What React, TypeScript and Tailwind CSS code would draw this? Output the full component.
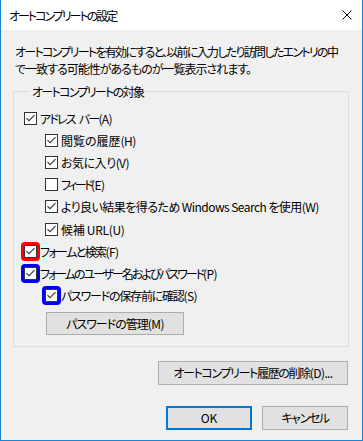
import React from "react";

function Box({ checked, ring }: { checked: boolean; ring?: "red" | "blue" }) {
  return (
    <span className="relative inline-flex w-[13px] h-[13px] shrink-0 border border-[#333333] bg-white items-center justify-center">
      {checked && (
        <svg width="11" height="11" viewBox="0 0 11 11">
          <polyline points="1.5,5.2 4,7.7 9.5,2.2" fill="none" stroke="#333333" strokeWidth="1.1" />
        </svg>
      )}
      {ring === "red" && (
        <span className="absolute -inset-[4px] border-[3px] border-[#ff0000] rounded-[4px]" />
      )}
      {ring === "blue" && (
        <span className="absolute -inset-[4px] border-[3px] border-[#0000ff] rounded-[4px]" />
      )}
    </span>
  );
}

function Row({
  children,
  checked,
  indent,
  ring,
}: {
  children: React.ReactNode;
  checked: boolean;
  indent?: boolean;
  ring?: "red" | "blue";
}) {
  return (
    <div className={indent ? "flex items-center h-[22.2px] pl-[21px]" : "flex items-center h-[22.2px]"}>
      <Box checked={checked} ring={ring} />
      <span className="ml-[3px] whitespace-nowrap">{children}</span>
    </div>
  );
}

function L({ children }: { children: React.ReactNode }) {
  return <span className="tracking-[-0.6px]">{children}</span>;
}

export default function App() {
  return (
    <div className="w-[363px] h-[441px] flex flex-col border-x border-b border-[#1883d7] bg-[#f0f0f0] text-[12px] leading-[15px] text-black font-['Noto_Sans_CJK_JP',sans-serif] [font-feature-settings:'palt']">
      <div className="h-[30px] bg-white flex items-center justify-between pl-[8px] pr-[10px] shrink-0">
        <span className="tracking-[-2px]">オートコンプリートの設定</span>
        <svg width="10" height="10" viewBox="0 0 10 10">
          <path d="M0.5 0.5 L9.5 9.5 M9.5 0.5 L0.5 9.5" stroke="#000" strokeWidth="1" fill="none" />
        </svg>
      </div>
      <div className="flex flex-col px-[12px] pt-[13px]">
        <div className="pl-[2px] leading-[17px] whitespace-nowrap flex flex-col">
          <span className="tracking-[-1.7px]">オートコンプリートを有効にすると、以前に入力したり訪問したエントリの中</span>
          <span className="tracking-[-1px]">で一致する可能性があるものが一覧表示されます。</span>
        </div>
        <fieldset className="mt-[7px] mr-[1px] border border-[#dcdcdc] pl-[10px] pr-[10px] pb-[11px] pt-[8px]">
          <legend className="ml-[6px] px-[2px] leading-[15px] tracking-[-1.67px]">オートコンプリートの対象</legend>
          <Row checked>
            <span className="tracking-[-1.8px]">アドレス</span>
            <span className="inline-block w-[4px]" />
            <span className="tracking-[-1.8px]">バー</span>
            <L>(A)</L>
          </Row>
          <Row checked indent>
            <span className="tracking-[0px]">閲覧の履歴</span>
            <L>(H)</L>
          </Row>
          <Row checked indent>
            <span className="tracking-[-0.48px]">お気に入り</span>
            <L>(V)</L>
          </Row>
          <Row checked={false} indent>
            <span className="tracking-[-2.6px]">フィード</span>
            <L>(E)</L>
          </Row>
          <Row checked indent>
            <span className="tracking-[-0.55px]">より良い結果を得るため Windows Search を使用(W)</span>
          </Row>
          <Row checked indent>
            <span className="tracking-[-0.3px]">候補 URL(U)</span>
          </Row>
          <Row checked ring="red">
            <span className="tracking-[-1.6px]">フォームと検索</span>
            <L>(F)</L>
          </Row>
          <Row checked ring="blue">
            <span className="tracking-[-2.05px]">フォームのユーザー名およびパスワード</span>
            <L>(P)</L>
          </Row>
          <Row checked indent ring="blue">
            <span className="tracking-[-1.22px]">パスワードの保存前に確認</span>
            <L>(S)</L>
          </Row>
          <div className="pl-[22px] mt-[5px]">
            <button className="w-[138px] h-[23px] bg-[#e1e1e1] border border-[#adadad] flex items-center justify-center whitespace-nowrap">
              <span className="tracking-[-1px]">パスワードの管理</span>
              <L>(M)</L>
            </button>
          </div>
        </fieldset>
        <div className="flex justify-end mt-[14px] pr-[2px]">
          <button className="w-[190px] h-[24px] bg-[#e1e1e1] border border-[#adadad] flex items-center justify-center whitespace-nowrap">
            <span className="tracking-[-1.35px]">オートコンプリート履歴の削除</span>
            <L>(D)...</L>
          </button>
        </div>
        <div className="flex justify-end gap-[10px] mt-[21px] pr-[2px]">
          <button className="w-[86px] h-[24px] bg-[#e1e1e1] border-2 border-[#0078d7] flex items-center justify-center">
            OK
          </button>
          <button className="w-[86px] h-[24px] bg-[#e1e1e1] border border-[#adadad] flex items-center justify-center tracking-[-1.4px]">
            キャンセル
          </button>
        </div>
      </div>
    </div>
  );
}
